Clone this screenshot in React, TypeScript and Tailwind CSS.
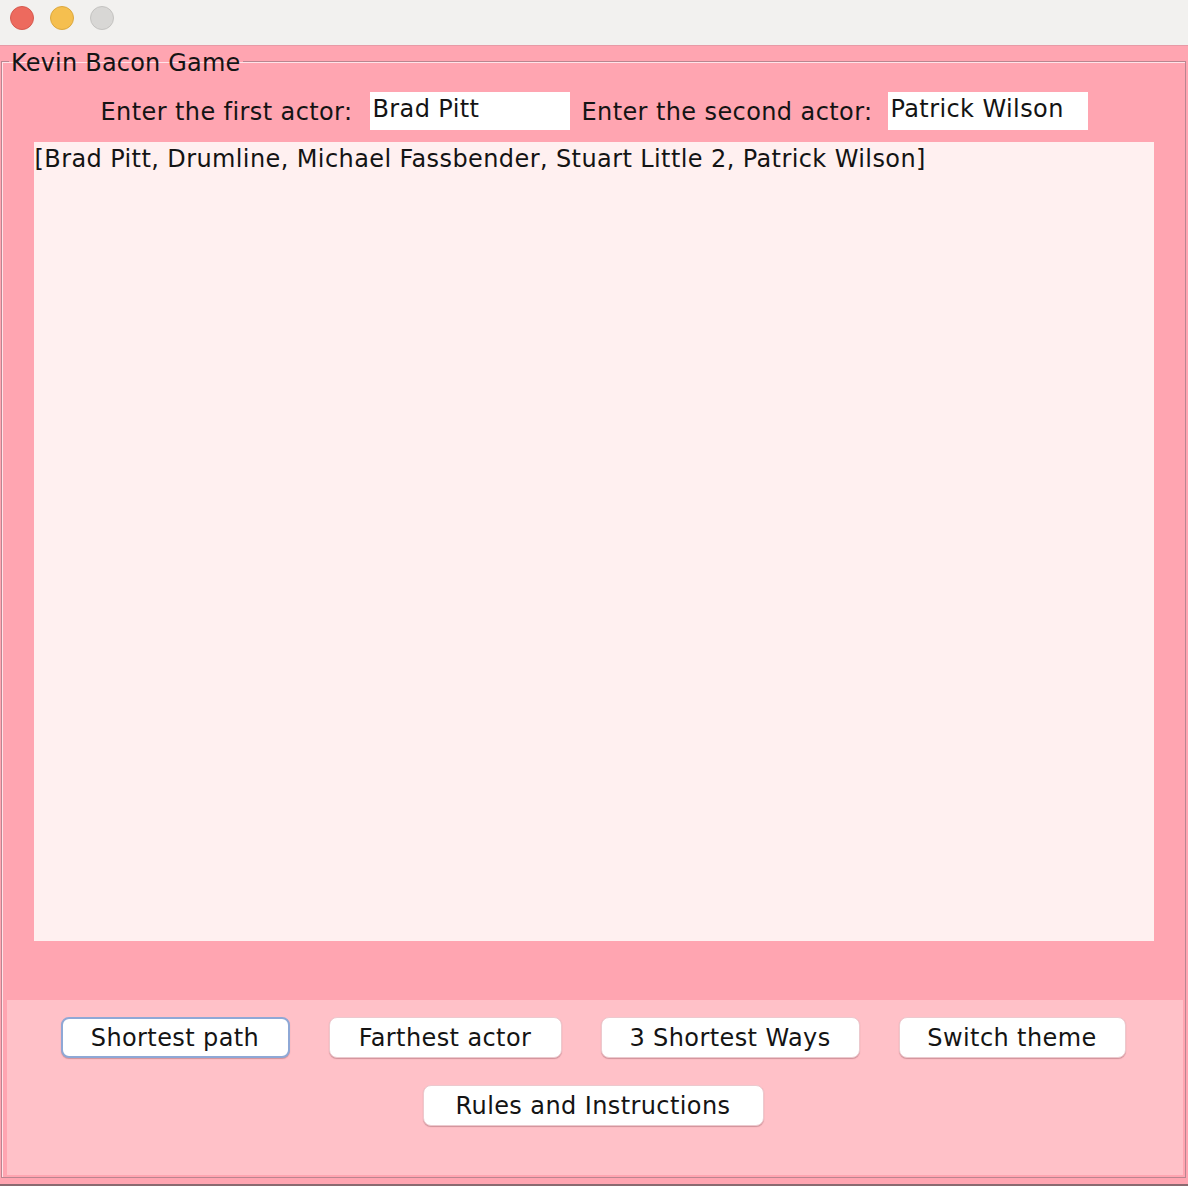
import React from "react";

const buttons = [
  { label: "Shortest path", w: "w-[229px]", focused: true },
  { label: "Farthest actor", w: "w-[233px]", focused: false },
  { label: "3 Shortest Ways", w: "w-[259px]", focused: false },
  { label: "Switch theme", w: "w-[227px]", focused: false },
];

function SwingButton({ label, w, focused }: { label: string; w: string; focused?: boolean }) {
  return (
    <button
      className={
        "h-[41px] rounded-[8px] bg-white text-[24px] tracking-[0.4px] leading-none text-[#141414] shadow-[0_1px_1px_rgba(120,60,70,0.35)] " +
        w +
        (focused ? " border-2 border-[#8ea8d6]" : " border border-[#ecc9ce]")
      }
    >
      {label}
    </button>
  );
}

export default function App() {
  return (
    <div
      className="w-[1188px] h-[1186px] flex flex-col bg-[#ffa5b1] text-[#141414] overflow-hidden tracking-[0.4px]"
      style={{ fontFamily: '"DejaVu Sans", "Liberation Sans", sans-serif' }}
    >
      {/* window title bar */}
      <div className="h-[46px] shrink-0 flex items-start gap-[16px] pl-[10px] pt-[6px] bg-[#f2f1ef] border-b border-[#e79aa6]">
        <span className="w-[24px] h-[24px] rounded-full bg-[#ed6a5e] border border-[#d65a4f]" />
        <span className="w-[24px] h-[24px] rounded-full bg-[#f5bf4f] border border-[#dca83f]" />
        <span className="w-[24px] h-[24px] rounded-full bg-[#d8d7d5] border border-[#c4c3c1]" />
      </div>

      <div className="flex-1 flex flex-col pl-[1px] pr-[2px] pb-[6px] border-b-2 border-[#8a6a70]">
        <fieldset className="flex-1 flex flex-col border border-[#b98590] shadow-[inset_1px_1px_0_#ffe3e8] min-h-0">
          <legend className="ml-[7px] px-[2px] pt-[4px] text-[24px] leading-[26px] tracking-[0.2px]">Kevin Bacon Game</legend>

          <div className="flex items-start justify-center pt-[16px] pl-[2px]">
            <label className="text-[24px] leading-[36px] mt-[2px] mr-[18px]">Enter the first actor:</label>
            <div className="w-[200px] h-[38px] bg-white px-[2px] pt-[1px] mr-[11px] text-[24px] leading-[32px]">Brad Pitt</div>
            <label className="text-[24px] leading-[36px] mt-[2px] mr-[16px]">Enter the second actor:</label>
            <div className="w-[200px] h-[38px] bg-white px-[2px] pt-[1px] text-[24px] leading-[32px]">Patrick Wilson</div>
          </div>

          <div className="mx-auto mt-[12px] w-[1120px] h-[799px] bg-[#fff0f0] px-[1px] text-[24px] leading-[34px]">
            [Brad Pitt, Drumline, Michael Fassbender, Stuart Little 2, Patrick Wilson]
          </div>

          <div className="flex-1 mt-[59px] ml-[5px] mr-[2px] mb-[2px] bg-[#ffc1c8] flex flex-col items-center pt-[17px] pr-[4px] gap-[27px]">
            <div className="flex gap-[39px]">
              {buttons.map((b) => (
                <SwingButton key={b.label} {...b} />
              ))}
            </div>
            <SwingButton label="Rules and Instructions" w="w-[341px]" />
          </div>
        </fieldset>
      </div>
    </div>
  );
}
